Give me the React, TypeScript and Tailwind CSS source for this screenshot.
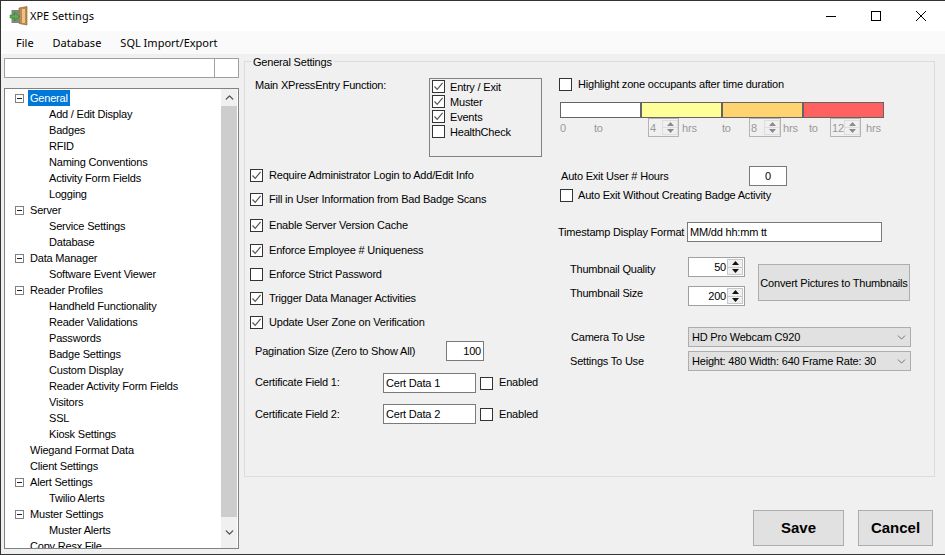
import { ChevronDown, ChevronUp } from 'lucide-react'

const TREE = [
  { label: 'General', level: 0, open: true, selected: true },
  { label: 'Add / Edit Display', level: 1 },
  { label: 'Badges', level: 1 },
  { label: 'RFID', level: 1 },
  { label: 'Naming Conventions', level: 1 },
  { label: 'Activity Form Fields', level: 1 },
  { label: 'Logging', level: 1 },
  { label: 'Server', level: 0, open: true },
  { label: 'Service Settings', level: 1 },
  { label: 'Database', level: 1 },
  { label: 'Data Manager', level: 0, open: true },
  { label: 'Software Event Viewer', level: 1 },
  { label: 'Reader Profiles', level: 0, open: true },
  { label: 'Handheld Functionality', level: 1 },
  { label: 'Reader Validations', level: 1 },
  { label: 'Passwords', level: 1 },
  { label: 'Badge Settings', level: 1 },
  { label: 'Custom Display', level: 1 },
  { label: 'Reader Activity Form Fields', level: 1 },
  { label: 'Visitors', level: 1 },
  { label: 'SSL', level: 1 },
  { label: 'Kiosk Settings', level: 1 },
  { label: 'Wiegand Format Data', level: 0 },
  { label: 'Client Settings', level: 0 },
  { label: 'Alert Settings', level: 0, open: true },
  { label: 'Twilio Alerts', level: 1 },
  { label: 'Muster Settings', level: 0, open: true },
  { label: 'Muster Alerts', level: 1 },
  { label: 'Copy Resx File', level: 0 },
]

const OPTIONS = [
  { label: 'Require Administrator Login to Add/Edit Info', checked: true, gap: 'mt-[10px]' },
  { label: 'Fill in User Information from Bad Badge Scans', checked: true, gap: 'mt-[8px]' },
  { label: 'Enable Server Version Cache', checked: true, gap: 'mt-[10px]' },
  { label: 'Enforce Employee # Uniqueness', checked: true, gap: 'mt-[9px]' },
  { label: 'Enforce Strict Password', checked: false, gap: 'mt-[8px]' },
  { label: 'Trigger Data Manager Activities', checked: true, gap: 'mt-[8px]' },
  { label: 'Update User Zone on Verification', checked: true, gap: 'mt-[8px]' },
]

function Check({ checked = false }: { checked?: boolean }) {
  return (
    <span className="flex h-[13px] w-[13px] shrink-0 items-center justify-center border border-[#333333] bg-white">
      {checked && (
        <svg width="11" height="11" viewBox="0 0 11 11" fill="none">
          <path d="M1.5 5.5 L4.2 8.4 L9.6 1.8" stroke="#555555" strokeWidth="1.2" />
        </svg>
      )}
    </span>
  )
}

function Arrows({ disabled = false }: { disabled?: boolean }) {
  const fill = disabled ? '#8a8a8a' : '#111111'
  const edge = disabled ? 'border-[#dddddd]' : 'border-[#c8c8c8]'
  return (
    <span className="flex h-full w-[16px] shrink-0 flex-col">
      <span className={`flex flex-1 items-center justify-center border bg-[#f0f0f0] ${edge}`}>
        <svg width="7" height="4" viewBox="0 0 7 4"><path d="M3.5 0 L7 4 L0 4 Z" fill={fill} /></svg>
      </span>
      <span className={`flex flex-1 items-center justify-center border-x border-b bg-[#f0f0f0] ${edge}`}>
        <svg width="7" height="4" viewBox="0 0 7 4"><path d="M0 0 L7 0 L3.5 4 Z" fill={fill} /></svg>
      </span>
    </span>
  )
}

function HourSpin({ value, width }: { value: string; width: string }) {
  return (
    <span className={`flex h-[19px] shrink-0 items-center border border-[#b4b4b4] pl-[1px] text-[#999999] ${width}`}>
      <span className="flex-1">{value}</span>
      <span className="h-[15px]"><Arrows disabled /></span>
    </span>
  )
}

function Spin({ value }: { value: string }) {
  return (
    <div className="flex h-[20px] w-[57px] items-center border border-[#a0a0a0] bg-white">
      <span className="flex-1 pr-[1px] text-right">{value}</span>
      <span className="h-[16px] pr-[1px]"><Arrows /></span>
    </div>
  )
}

function Field({ value, className }: { value: string; className: string }) {
  return <div className={`flex h-[20px] items-center border border-[#7a7a7a] bg-white pl-[2px] ${className}`}>{value}</div>
}

function Combo({ value, className }: { value: string; className?: string }) {
  return (
    <div className={`flex h-[20px] w-[223px] items-center justify-between whitespace-nowrap border border-[#adadad] bg-[#e1e1e1] pl-[3px] pr-[2px] ${className ?? ''}`}>
      <span>{value}</span>
      <ChevronDown size={13} strokeWidth={1.3} color="#444444" />
    </div>
  )
}

function Tree() {
  return (
    <div className="mt-[10px] flex h-[461px] border border-[#828282] bg-white">
      <div className="h-full flex-1 overflow-hidden pt-[1px]">
        {TREE.map((row) => (
          <div key={row.label} className="flex h-[16px] items-center">
            <span className="flex w-[23px] shrink-0 justify-end">
              {row.open && (
                <span className="mr-[4px] flex h-[9px] w-[9px] items-center justify-center border border-[#808080]">
                  <span className="h-[1px] w-[5px] bg-[#222222]" />
                </span>
              )}
            </span>
            <span
              className={
                row.selected
                  ? 'bg-[#0078d7] px-[2px] leading-[16px] text-white'
                  : row.level === 1
                    ? 'ml-[19px] whitespace-nowrap px-[2px]'
                    : 'whitespace-nowrap px-[2px]'
              }
            >
              {row.label}
            </span>
          </div>
        ))}
      </div>
      <div className="mr-[1px] flex w-[16px] shrink-0 flex-col bg-[#f0f0f0]">
        <div className="flex h-[17px] items-center justify-center">
          <ChevronUp size={13} strokeWidth={2.5} color="#505050" />
        </div>
        <div className="h-[411px] bg-[#cdcdcd]" />
        <div className="flex flex-1 items-center justify-center">
          <ChevronDown size={13} strokeWidth={2.5} color="#505050" />
        </div>
      </div>
    </div>
  )
}

export default function App() {
  return (
    <div
      className="flex h-[555px] w-[945px] flex-col overflow-hidden border-y border-l border-[#333333] bg-[#f0f0f0] text-[11px] leading-[14px] tracking-[-0.2px] text-black"
      style={{ fontFamily: '"Liberation Sans", Arial, sans-serif' }}
    >
      {/* title bar */}
      <div className="flex h-[30px] shrink-0 items-center bg-white pl-[8px] tracking-normal" style={{ fontFamily: '"Noto Sans", sans-serif' }}>
        <svg width="20" height="20" viewBox="0 0 20 20" className="shrink-0">
          <path d="M10 2 L18 0.5 V19 L10 17.5 Z" fill="#c08a4a" stroke="#8a5a28" strokeWidth="0.6" />
          <rect x="13" y="3" width="3" height="14" fill="#e8c48c" />
          <rect x="2.5" y="4" width="8" height="13" fill="#7d8a7d" />
          <path d="M1 9 H5.5 V6.5 L10.5 10.5 L5.5 14.5 V12 H1 Z" fill="#58b048" stroke="#2f6f2a" strokeWidth="0.5" />
        </svg>
        <span className="ml-[1px]">XPE Settings</span>
        <div className="ml-auto flex items-center gap-[33px] pr-[18px]">
          <svg width="12" height="12" viewBox="0 0 12 12"><path d="M1 6.5 H11" stroke="#000" /></svg>
          <svg width="12" height="12" viewBox="0 0 12 12"><rect x="1.5" y="1.5" width="9" height="9" fill="none" stroke="#000" /></svg>
          <svg width="12" height="12" viewBox="0 0 12 12"><path d="M1 1 L11 11 M11 1 L1 11" stroke="#000" /></svg>
        </div>
      </div>

      {/* menu */}
      <div className="flex h-[23px] shrink-0 items-center gap-[19px] bg-[#fafafa] pl-[15px] tracking-normal" style={{ fontFamily: '"Noto Sans", sans-serif' }}>
        <span>File</span>
        <span>Database</span>
        <span>SQL Import/Export</span>
      </div>

      <div className="flex flex-1">
        {/* nav */}
        <div className="w-[243px] shrink-0 pl-[3px] pr-[5px] pt-[4px]">
          <div className="flex h-[20px] border border-[#a0a0a0] bg-white">
            <div className="flex-1 border-r border-[#a0a0a0]" />
            <div className="w-[23px]" />
          </div>
          <Tree />
        </div>

        {/* settings */}
        <div className="flex-1">
          <div className="relative mt-[7px] flex h-[416px] w-[691px] border border-[#dcdcdc]">
            <span className="absolute left-[6px] top-[-7px] bg-[#f0f0f0] px-[2px]">General Settings</span>

            <div className="w-[313px] shrink-0 pl-[5px] pt-[16px]">
              <div className="flex">
                <span className="ml-[5px] w-[174px] shrink-0">Main XPressEntry Function:</span>
                <div className="h-[79px] w-[113px] border border-[#828282] pl-[2px]">
                  {['Entry / Exit', 'Muster', 'Events', 'HealthCheck'].map((item, i) => (
                    <div key={item} className="flex h-[15px] items-center gap-[5px]">
                      <Check checked={i < 3} />
                      <span>{item}</span>
                    </div>
                  ))}
                </div>
              </div>

              {OPTIONS.map((opt) => (
                <div key={opt.label} className={`flex h-[16px] items-center gap-[6px] ${opt.gap}`}>
                  <Check checked={opt.checked} />
                  <span>{opt.label}</span>
                </div>
              ))}

              <div className="mt-[11px] flex h-[20px] items-center">
                <span className="ml-[5px] w-[191px] shrink-0">Pagination Size (Zero to Show All)</span>
                <div className="flex h-[20px] w-[38px] items-center justify-end border border-[#7a7a7a] bg-white pr-[2px]">100</div>
              </div>
              <div className="mt-[12px] flex h-[20px] items-center">
                <span className="ml-[5px] w-[128px] shrink-0 pb-[3px]">Certificate Field 1:</span>
                <Field value="Cert Data 1" className="w-[93px]" />
                <span className="ml-[4px]"><Check /></span>
                <span className="ml-[6px] pb-[3px]">Enabled</span>
              </div>
              <div className="mt-[11px] flex h-[20px] items-center">
                <span className="ml-[5px] w-[128px] shrink-0">Certificate Field 2:</span>
                <Field value="Cert Data 2" className="w-[93px]" />
                <span className="ml-[4px]"><Check /></span>
                <span className="ml-[6px]">Enabled</span>
              </div>
            </div>

            <div className="flex-1 pt-[14px]">
              <div className="flex h-[16px] items-center gap-[6px] pl-[1px]">
                <Check />
                <span>Highlight zone occupants after time duration</span>
              </div>
              <div className="ml-[2px] mt-[10px] flex h-[16px] w-[324px] border border-[#646464]">
                <div className="flex-1 border-r-2 border-[#646464] bg-white" />
                <div className="flex-1 border-r-2 border-[#646464] bg-[#ffff99]" />
                <div className="flex-1 border-r-2 border-[#646464] bg-[#ffd470]" />
                <div className="flex-1 bg-[#ff6060]" />
              </div>
              <div className="ml-[2px] flex h-[19px] items-center text-[#999999]">
                <span className="w-[34px] shrink-0">0</span>
                <span className="w-[54px] shrink-0">to</span>
                <HourSpin value="4" width="w-[31px]" />
                <span className="ml-[3px] w-[40px] shrink-0">hrs</span>
                <span className="w-[27px] shrink-0">to</span>
                <HourSpin value="8" width="w-[32px]" />
                <span className="ml-[2px] w-[26px] shrink-0">hrs</span>
                <span className="w-[21px] shrink-0">to</span>
                <HourSpin value="12" width="w-[31px]" />
                <span className="ml-[5px]">hrs</span>
              </div>

              <div className="mt-[29px] flex h-[20px] items-center pl-[3px]">
                <span className="w-[188px] shrink-0 pb-[1px]">Auto Exit User # Hours</span>
                <div className="flex h-[20px] w-[38px] items-center justify-center border border-[#7a7a7a] bg-white">0</div>
              </div>
              <div className="mt-[1px] flex h-[16px] items-center gap-[5px] pl-[2px]">
                <Check />
                <span>Auto Exit Without Creating Badge Activity</span>
              </div>

              <div className="mt-[19px] flex h-[20px] items-center">
                <span className="w-[129px] shrink-0 whitespace-nowrap">Timestamp Display Format</span>
                <Field value="MM/dd hh:mm tt" className="w-[195px]" />
              </div>

              <div className="mt-[15px] flex">
                <div className="w-[130px] shrink-0 pl-[12px]">
                  <div className="flex h-[20px] items-center pt-[4px]">Thumbnail Quality</div>
                  <div className="mt-[6px] flex h-[20px] items-center">Thumbnail Size</div>
                </div>
                <div className="flex w-[70px] shrink-0 flex-col gap-[9px]">
                  <Spin value="50" />
                  <Spin value="200" />
                </div>
                <div className="mt-[7px] flex h-[37px] w-[152px] items-center justify-center whitespace-nowrap border border-[#adadad] bg-[#e1e1e1]">
                  Convert Pictures to Thumbnails
                </div>
              </div>

              <div className="mt-[21px] flex items-center">
                <span className="w-[130px] shrink-0 pl-[13px]">Camera To Use</span>
                <Combo value="HD Pro Webcam C920" />
              </div>
              <div className="mt-[4px] flex items-center">
                <span className="w-[130px] shrink-0 pl-[12px]">Settings To Use</span>
                <Combo value="Height: 480 Width: 640 Frame Rate: 30" />
              </div>
            </div>
          </div>

          <div className="mt-[33px] flex justify-end gap-[14px] pr-[12px] text-[15px] font-bold tracking-normal">
            <div className="flex h-[36px] w-[91px] items-center justify-center border border-[#adadad] bg-[#e1e1e1]">Save</div>
            <div className="flex h-[36px] w-[75px] items-center justify-center border border-[#adadad] bg-[#e1e1e1]">Cancel</div>
          </div>
        </div>
      </div>
    </div>
  )
}
